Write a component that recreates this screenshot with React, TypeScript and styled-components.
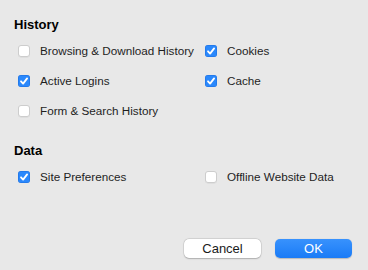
import React, { useState } from 'react';
import { styled, createGlobalStyle } from 'styled-components';

const GlobalStyle = createGlobalStyle`
  html, body {
    margin: 0;
    padding: 0;
    background: #e8e8e8;
  }
  body {
    font-family: "Liberation Sans", Arial, sans-serif;
    color: #1e1e1e;
  }
  * {
    box-sizing: border-box;
  }
`;

interface Option {
  label: string;
  checked: boolean;
}

const history: Option[] = [
  { label: 'Browsing & Download History', checked: false },
  { label: 'Cookies', checked: true },
  { label: 'Active Logins', checked: true },
  { label: 'Cache', checked: true },
  { label: 'Form & Search History', checked: false },
];

const data: Option[] = [
  { label: 'Site Preferences', checked: true },
  { label: 'Offline Website Data', checked: false },
];

const CheckIcon = () => (
  <svg width="12" height="12" viewBox="0 0 12 12">
    <path d="M3 6.3 L5.1 8.6 L9.1 3.4" fill="none" stroke="#fff" strokeWidth="1.8" strokeLinecap="round" strokeLinejoin="round" />
  </svg>
);

const OptionGrid = ({ items }: { items: Option[] }) => {
  const [values, setValues] = useState(items.map((i) => i.checked));

  return (
    <Grid>
      {items.map((item, idx) => (
        <Row
          key={item.label}
          onClick={() => setValues(values.map((v, i) => (i === idx ? !v : v)))}
        >
          <Box $checked={values[idx]}>{values[idx] && <CheckIcon />}</Box>
          <Label>{item.label}</Label>
        </Row>
      ))}
    </Grid>
  );
};

const App = () => {
  return (
    <Dialog>
      <GlobalStyle />
      <Section>
        <Heading>History</Heading>
        <OptionGrid items={history} />
      </Section>
      <Section>
        <Heading>Data</Heading>
        <OptionGrid items={data} />
      </Section>
      <Footer>
        <Button>Cancel</Button>
        <Button $primary>OK</Button>
      </Footer>
    </Dialog>
  );
};

export default App;

const Dialog = styled.div`
  display: flex;
  flex-direction: column;
  height: 270px;
  padding: 16px 16px 12px 14px;
`;

const Section = styled.div`
  display: flex;
  flex-direction: column;
  gap: 3px;
  margin-bottom: 16px;
`;

const Heading = styled.div`
  margin-top: 1px;
  font-size: 13px;
  line-height: 16px;
  font-weight: 700;
  color: #000;
`;

const Grid = styled.div`
  display: grid;
  grid-template-columns: 187px 1fr;
  padding-left: 4px;
`;

const Row = styled.div`
  display: flex;
  align-items: center;
  gap: 10px;
  height: 30px;
  cursor: default;
`;

const Box = styled.span<{ $checked: boolean }>`
  display: flex;
  align-items: center;
  justify-content: center;
  width: 12px;
  height: 12px;
  border-radius: 3px;
  background: ${(p) => (p.$checked ? '#2a88fc' : '#ffffff')};
  box-shadow: ${(p) =>
    p.$checked
      ? 'inset 0 0 0 0.5px rgba(0, 60, 160, 0.35)'
      : 'inset 0 0 0 1px #cdcdcd, 0 0.5px 0.5px rgba(0, 0, 0, 0.08)'};
`;

const Label = styled.span`
  font-size: 11.7px;
  line-height: 14px;
  color: #1e1e1e;
  white-space: nowrap;
`;

const Footer = styled.div`
  display: flex;
  justify-content: flex-end;
  gap: 14px;
  margin-top: auto;
`;

const Button = styled.button<{ $primary?: boolean }>`
  width: 77px;
  height: 19px;
  padding: 0;
  border: none;
  border-radius: 5px;
  font-family: "Liberation Sans", Arial, sans-serif;
  font-size: 13px;
  line-height: 19px;
  color: ${(p) => (p.$primary ? '#ffffff' : '#1a1a1a')};
  background: ${(p) => (p.$primary ? 'linear-gradient(#3892fd, #1a7bf6)' : '#ffffff')};
  box-shadow: ${(p) =>
    p.$primary
      ? '0 0.5px 1px rgba(0, 0, 0, 0.2)'
      : '0 0 0 0.5px rgba(0, 0, 0, 0.12), 0 0.5px 1.5px rgba(0, 0, 0, 0.2)'};
  cursor: pointer;
`;
